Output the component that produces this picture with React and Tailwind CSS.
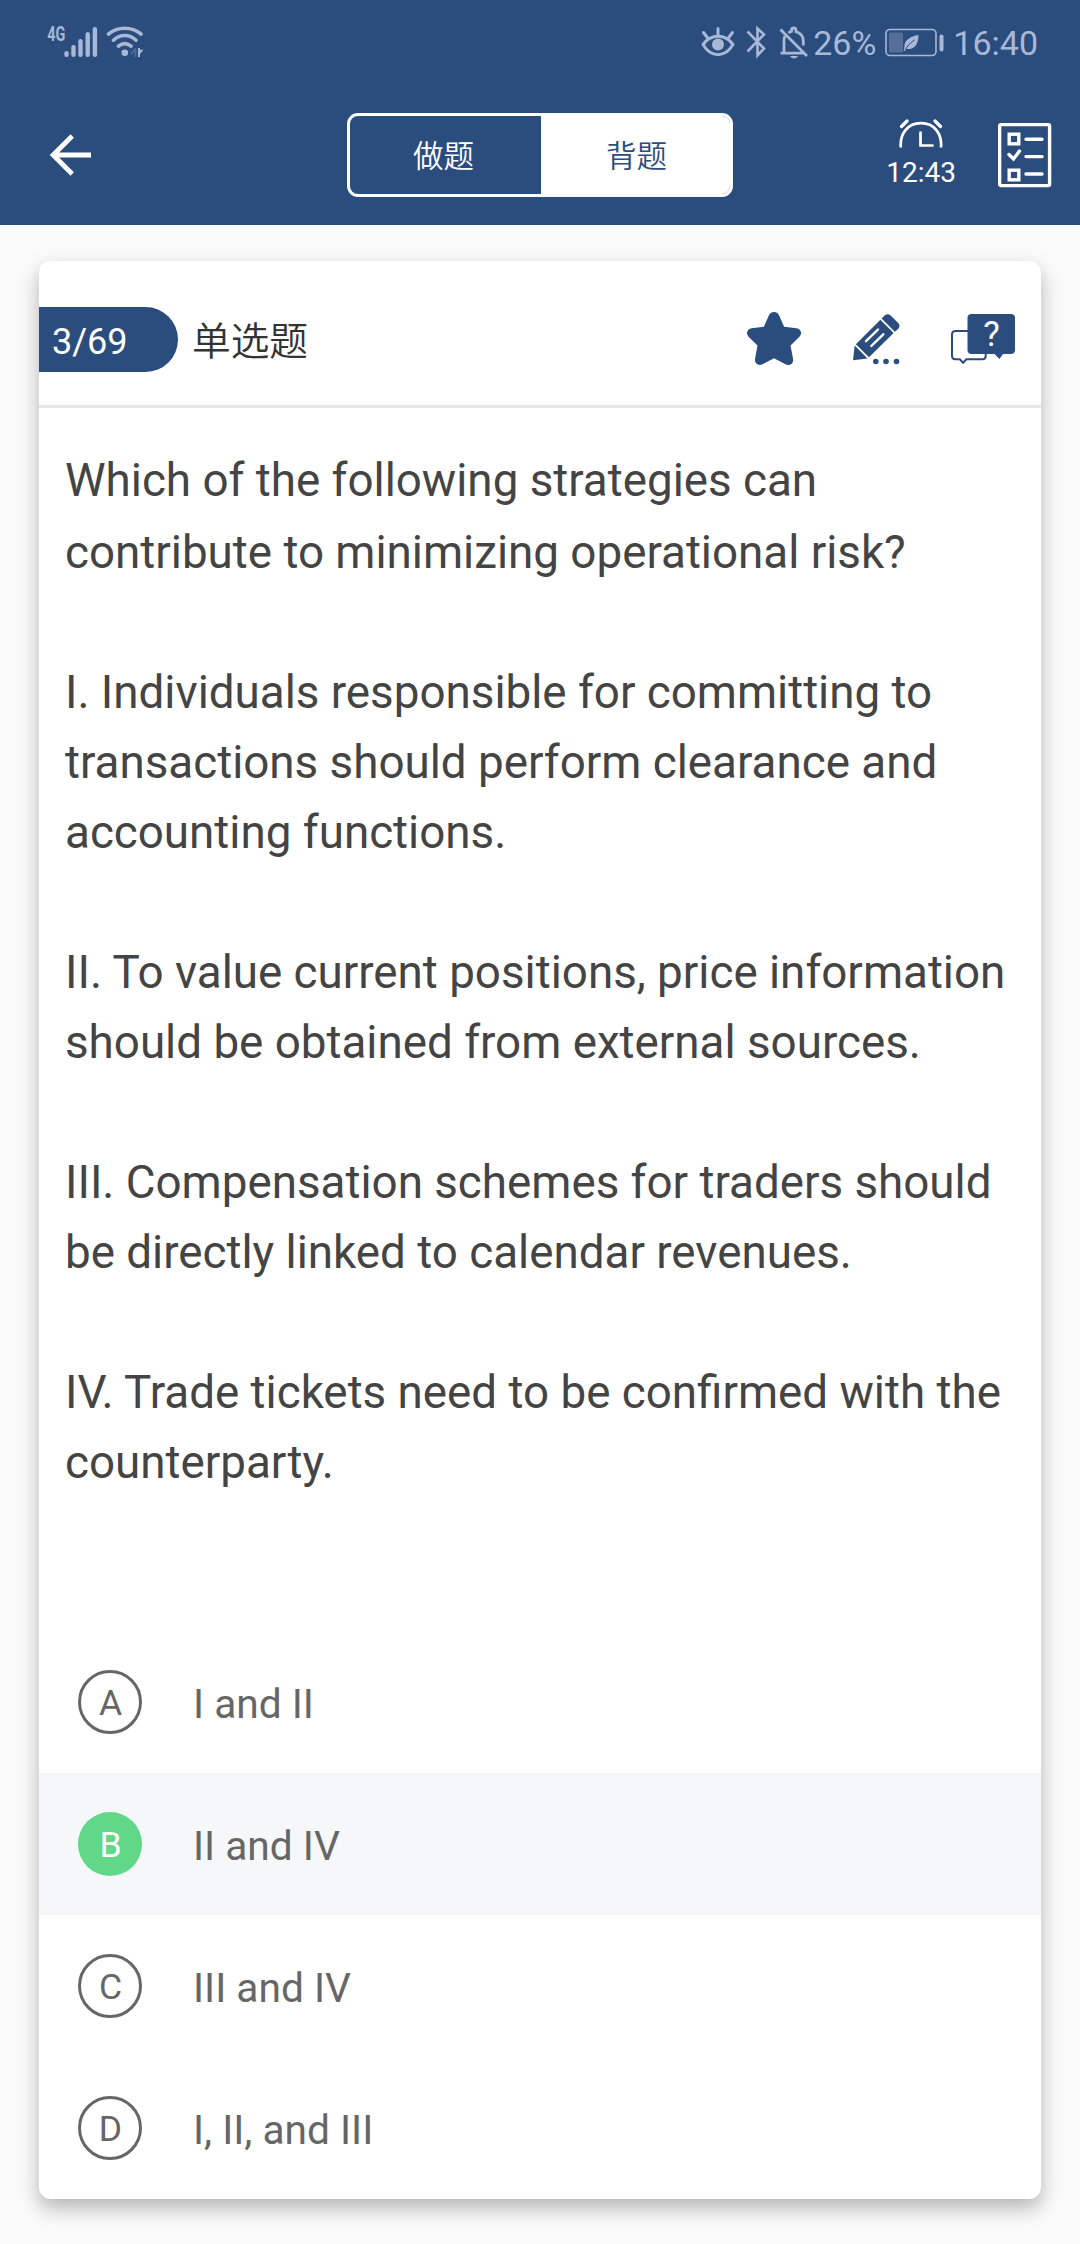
import React, { useState } from 'react';

const question = [
  ['Which of the following strategies can', 'contribute to minimizing operational risk?'],
  ['I. Individuals responsible for committing to', 'transactions should perform clearance and', 'accounting functions.'],
  ['II. To value current positions, price information', 'should be obtained from external sources.'],
  ['III. Compensation schemes for traders should', 'be directly linked to calendar revenues.'],
  ['IV. Trade tickets need to be confirmed with the', 'counterparty.'],
];

const options = [
  { key: 'A', text: 'I and II' },
  { key: 'B', text: 'II and IV' },
  { key: 'C', text: 'III and IV' },
  { key: 'D', text: 'I, II, and III' },
];

const SignalIcon = () => (
  <svg className="overflow-visible" width="52" height="34" viewBox="0 0 52 34" fill="none" stroke="currentColor" strokeWidth="4.4" strokeLinecap="round">
    <text x="1.2" y="16" fontSize="20" fontWeight="700" fill="currentColor" stroke="none" textLength="18" lengthAdjust="spacingAndGlyphs">4G</text>
    <path d="M20.500 28.200v1.600M27.500 22.200v7.600M34.500 16.200v13.600M41.700 9.200v20.600M48.900 4.200v25.600" />
  </svg>
);

const WifiIcon = () => (
  <svg width="38" height="34" viewBox="0 0 38 34" fill="none" stroke="currentColor" strokeWidth="3.6" strokeLinecap="round">
    <path d="M2.500 9C12 1.300 25.500 1.300 35 9M7.500 15.200c6.500-6.200 16-6.200 22.500 0M12.500 21.200c3.900-3.300 8.600-3.300 12.500 0" />
    <circle cx="18.800" cy="27.700" r="3.300" fill="currentColor" stroke="none" />
    <path d="M29.500 24v7.500M25.500 28.500l4-4.500" strokeWidth="1.800" opacity="0.3" />
    <path d="M32 23v9h2v-3l3.500-4.200h-3.500V23z" fill="currentColor" stroke="none" />
  </svg>
);

const EyeIcon = () => (
  <svg width="34" height="34" viewBox="0 0 34 34" fill="none" stroke="currentColor" strokeWidth="3" strokeLinecap="round">
    <path d="M2 19.500C10 8.500 24 8.500 32 19.500 24 33 10 33 2 19.500z" strokeLinejoin="round" />
    <circle cx="17" cy="19.500" r="6" fill="currentColor" stroke="none" />
    <path d="M17 3.500v6.500M2.500 7.500l4.500 6M31.500 7.500l-4.500 6" />
  </svg>
);

const BluetoothIcon = () => (
  <svg width="21" height="34" viewBox="0 0 21 34" fill="none" stroke="currentColor" strokeWidth="2.600">
    <path d="M1.500 6.500L18 23.500l-6.500 7v-27L18 9.500 1.500 26.500" />
  </svg>
);

const BellOffIcon = () => (
  <svg width="30" height="34" viewBox="0 0 30 34" fill="none" stroke="currentColor" strokeWidth="2.800">
    <path d="M1.500 4.500L28 31M1.500 28.200H25M5 28V15.500c0-1.600.3-3.100.9-4.500M9.500 8c1-.9 2-1.400 3-1.700M12.500 7.500V5.200c0-1.300.9-2.200 2.200-2.200S17 3.900 17 5.200v1.500c4.500 1.400 7.300 4.600 7.300 9.300v4.500" />
    <path d="M11 31h8c-1.500 3.200-6.500 3.200-8 0z" fill="currentColor" stroke="none" />
  </svg>
);

const BatteryIcon = () => (
  <svg width="60" height="34" viewBox="0 0 60 34" fill="none">
    <rect x="1" y="4.500" width="50" height="26" rx="4" stroke="currentColor" strokeWidth="1.600" />
    <rect x="4" y="7.500" width="14" height="20" rx="1.500" fill="currentColor" opacity="0.33" />
    <rect x="54.500" y="9.500" width="4" height="17" rx="2" fill="currentColor" />
    <path d="M33.500 10c-8 1-14.500 5.500-14 11.500l-.8 4.500 2-.2.800-2c7.500 1.500 12-4.500 12-13.800z" fill="currentColor" />
    <path d="M20 25.500c2-4.500 5.500-8 9.500-10.500" stroke="#2b4d7e" strokeWidth="1" />
  </svg>
);

const BackIcon = () => (
  <svg width="42" height="42" viewBox="0 0 42 42" fill="none" stroke="currentColor" strokeWidth="4.800">
    <path d="M22.200 2L3.200 21l19 19M4 21h37" />
  </svg>
);

const AlarmIcon = () => (
  <svg width="44" height="29" viewBox="0 0 44 29" fill="none" stroke="currentColor" strokeWidth="2.700">
    <path d="M1.800 28.500C.6 14.500 8.800 4.200 22 4.200S43.200 14.500 42 28.500" />
    <path d="M2.500 7.500L8 2M41.500 7.500L36 2" strokeWidth="3.200" strokeLinecap="round" />
    <path d="M21.500 13.500v13h12" strokeLinecap="round" />
  </svg>
);

const ChecklistIcon = () => (
  <svg width="54" height="65" viewBox="0 0 54 65" fill="none" stroke="currentColor" strokeWidth="3.400">
    <rect x="1.600" y="1.600" width="50" height="61" rx="1.500" />
    <rect x="11.200" y="11.200" width="9.600" height="9.600" />
    <rect x="11.200" y="47.200" width="9.600" height="9.600" />
    <path d="M28 16.300h16M28 33.600h16M28 51h16M11 31.500l4.500 4.500 6-8" strokeLinecap="round" />
  </svg>
);

const StarIcon = () => (
  <svg width="54" height="54" viewBox="0 0 54 54" fill="currentColor">
    <path d="M27 0c2.500 0 4.300 1.300 5.300 3.800l4.800 11 12.400 1.400c3.500.5 5.200 3.300 4.300 6.300-.3 1-.8 1.800-1.600 2.500L43.500 33.500l2.600 13.400c.6 3.600-1.900 6.100-5.100 6.100-.8 0-1.700-.3-2.500-.7L27 46.200l-11.500 6.100c-4 2-8.100-1-7.500-5.400l2.500-13.400L1.800 25C-1.300 22-.3 17 4.500 16.200l12.400-1.400 4.800-11C22.700 1.300 24.500 0 27 0z" />
  </svg>
);

const PencilIcon = () => (
  <svg width="47" height="51" viewBox="0 0 47 51" fill="currentColor">
    <path d="M28.600 4.600L31.600 1.400c1.800-1.700 4.300-1.700 6 0l7.600 7.600c1.700 1.800 1.700 4.300 0 6L41.800 17.800z" />
    <path d="M27.400 5.800L40.600 19 16 43.300 2.900 30.200z" />
    <path d="M1.700 31.600L14.500 44.500 0 46.200z" />
    <path d="M13 27.200L25 15.500M18.300 32L30.300 20.300" stroke="#fff" strokeWidth="2.400" strokeLinecap="round" />
    <circle cx="22.800" cy="47.500" r="2.800" />
    <circle cx="33" cy="47.500" r="2.800" />
    <circle cx="43.500" cy="47.500" r="2.800" />
  </svg>
);

const HelpIcon = () => (
  <svg width="65" height="51" viewBox="0 0 65 51" fill="none">
    <path d="M17 17H4.500C2.300 17 1 18.300 1 20.500v21.300c0 2.200 1.300 3.500 3.500 3.500h4.300l3.300 3.500 3.300-3.500h15.900c2.200 0 3.400-1.300 3.400-3.500v-2" stroke="currentColor" strokeWidth="2" />
    <path d="M20.500 0H60c2.500 0 4 1.500 4 4v32c0 2.500-1.500 4-4 4h-8l-3.500 5-5-5h-23c-2.500 0-4-1.500-4-4V4c0-2.500 1.500-4 4-4z" fill="currentColor" />
    <text x="40.500" y="32" textAnchor="middle" fontSize="35" fontWeight="400" fill="#fff">?</text>
  </svg>
);

export default function App() {
  const [mode, setMode] = useState('recite');

  return (
    <div className="flex h-[2244px] w-[1080px] flex-col overflow-hidden bg-[#fafafa] font-[Roboto,'Noto_Sans_CJK_SC',sans-serif]">
      <header className="h-[225px] bg-[#2b4d7e] text-white">
        {/* Status bar */}
        <div className="flex h-[84px] items-center justify-between pr-[42px] pl-[46px] text-[#a9b8d6]">
          <div className="flex items-center gap-2">
            <SignalIcon />
            <WifiIcon />
          </div>
          <div className="flex items-center text-[34px] leading-none">
            <EyeIcon />
            <span className="ml-[11px]"><BluetoothIcon /></span>
            <span className="ml-[12px]"><BellOffIcon /></span>
            <span className="mt-0.5 ml-1">26%</span>
            <span className="ml-[9px]"><BatteryIcon /></span>
            <span className="mt-0.5 ml-[8px]">16:40</span>
          </div>
        </div>

        {/* Nav bar */}
        <div className="grid h-[141px] grid-cols-[1fr_386px_1fr] items-center">
          <button className="flex pl-[50px]"><BackIcon /></button>
          <div className="flex h-[84px] overflow-hidden rounded-[11px] border-3 border-white text-[30.5px] leading-none font-[350]">
            <button
              onClick={() => setMode('practice')}
              className={`flex-1 pt-[5px] pr-[4px] ${mode === 'practice' ? 'bg-white text-[#2b4d7e]' : ''}`}
            >
              做题
            </button>
            <button
              onClick={() => setMode('recite')}
              className={`flex-1 pt-[5px] pl-[2px] ${mode === 'recite' ? 'bg-white text-[#2b4d7e]' : ''}`}
            >
              背题
            </button>
          </div>
          <div className="flex items-center justify-end gap-[42px] pr-[28px]">
            <div className="mb-1 flex flex-col items-center gap-[11px]">
              <AlarmIcon />
              <span className="text-[28px] leading-7">12:43</span>
            </div>
            <span className="pt-[2px]"><ChecklistIcon /></span>
          </div>
        </div>
      </header>

      <main className="mx-[39px] mt-9 h-[1938px] rounded-xl bg-white shadow-[0_9px_20px_rgba(0,0,0,0.28)]">
        <div className="flex h-[147px] items-center border-b-3 border-[#e6e6e6] pr-[25px] text-[#2b4d7e]">
          <span className="mt-[13px] flex h-[65px] w-[139px] items-center rounded-r-full bg-[#2b4d7e] pt-1 pl-[13px] text-[36px] leading-none text-white">
            3/69
          </span>
          <span className="mt-[18px] ml-[14px] text-[38.7px] leading-none font-[350] text-[#333]">单选题</span>
          <div className="mt-[12px] ml-auto flex items-center">
            <StarIcon />
            <span className="ml-[52px]"><PencilIcon /></span>
            <span className="ml-[51px]"><HelpIcon /></span>
          </div>
        </div>

        <div className="h-[1223px] pt-[37px] pl-[26px] text-[45.75px] leading-[70px] whitespace-nowrap text-[#444]">
          {question.map((lines, i) => (
            <p key={i} className="mb-[70px] first:mb-[69px] first:leading-[72px]">
              {lines.map((line) => (
                <span key={line} className="block">{line}</span>
              ))}
            </p>
          ))}
        </div>

        <ul>
          {options.map(({ key, text }) => (
            <li key={key} className={`flex h-[142px] items-center pl-[39px] text-[#666] ${key === 'B' ? 'bg-[#f5f7f9]' : ''}`}>
              <span
                className={`flex size-16 items-center justify-center rounded-full pt-[3px] pl-px text-[35.5px] leading-none ${key === 'B' ? 'bg-[#61d788] text-white' : 'border-3 border-[#666]'}`}
              >
                {key}
              </span>
              <span className="mt-[5px] ml-[51px] text-[40.7px] leading-none">{text}</span>
            </li>
          ))}
        </ul>
      </main>
    </div>
  );
}
